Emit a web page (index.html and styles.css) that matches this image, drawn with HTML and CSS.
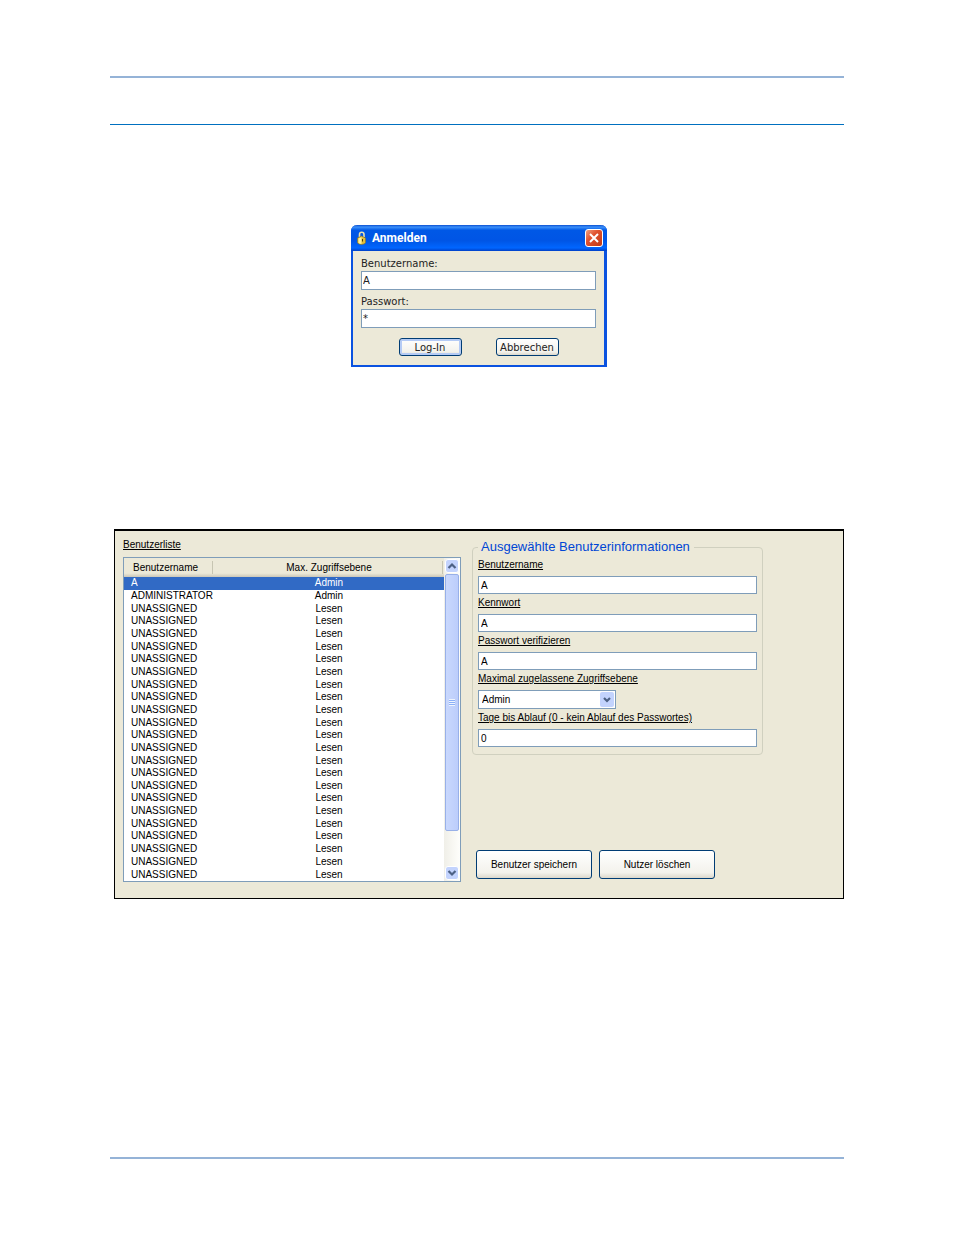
FILE: index.html
```html
<!DOCTYPE html>
<html lang="de">
<head>
  <meta charset="UTF-8">
  <meta name="viewport" content="width=device-width, initial-scale=1.0">
  <title>Anmelden</title>
  <link rel="stylesheet" href="styles.css">
</head>
<body>
  <header class="page-header"></header>

  <main class="content">
    <form class="dialog">
      <div class="title-bar">
        <svg class="lock" viewBox="0 0 12 16" aria-hidden="true">
          <path d="M3.500 8V4.500c0-3 4.500-3 4.500 0V7" fill="none" stroke="#e8e0b0" stroke-width="1.600"/>
          <path d="M1.500 8l4-2 4 2v4.500c0 1-2.500 2-4 2s-4-1-4-2z" fill="#e2bd3a" stroke="#8a7420" stroke-width=".6"/>
          <path d="M2.500 8.500l3-1.200v6.500c-1.500 0-3-.6-3-1.300z" fill="#fff3a0"/>
          <path d="M6.500 9v2.500" stroke="#4a3c08" stroke-width="1"/>
        </svg>
        <h1>Anmelden</h1>
        <button type="button" class="close" aria-label="Schließen">
          <svg viewBox="0 0 18 18" aria-hidden="true"><path d="M4.500 4.500l9 9M13.500 4.500l-9 9" stroke="#fff" stroke-width="2.200"/></svg>
        </button>
      </div>
      <div class="dialog-body">
        <label for="login-name">Benutzername:</label>
        <input type="text" id="login-name" value="A">
        <label for="login-pass">Passwort:</label>
        <input type="text" id="login-pass" value="*">
        <div class="dialog-buttons">
          <button type="submit" class="default">Log-In</button>
          <button type="button">Abbrechen</button>
        </div>
      </div>
    </form>

    <section class="panel">
      <div class="users">
        <h2>Benutzerliste</h2>
        <div class="list">
          <div class="list-view">
            <table>
              <thead>
                <tr><th>Benutzername</th><th>Max. Zugriffsebene</th></tr>
              </thead>
              <tbody>
                <tr class="selected"><td>A</td><td>Admin</td></tr>
                <tr><td>ADMINISTRATOR</td><td>Admin</td></tr>
                <tr><td>UNASSIGNED</td><td>Lesen</td></tr>
                <tr><td>UNASSIGNED</td><td>Lesen</td></tr>
                <tr><td>UNASSIGNED</td><td>Lesen</td></tr>
                <tr><td>UNASSIGNED</td><td>Lesen</td></tr>
                <tr><td>UNASSIGNED</td><td>Lesen</td></tr>
                <tr><td>UNASSIGNED</td><td>Lesen</td></tr>
                <tr><td>UNASSIGNED</td><td>Lesen</td></tr>
                <tr><td>UNASSIGNED</td><td>Lesen</td></tr>
                <tr><td>UNASSIGNED</td><td>Lesen</td></tr>
                <tr><td>UNASSIGNED</td><td>Lesen</td></tr>
                <tr><td>UNASSIGNED</td><td>Lesen</td></tr>
                <tr><td>UNASSIGNED</td><td>Lesen</td></tr>
                <tr><td>UNASSIGNED</td><td>Lesen</td></tr>
                <tr><td>UNASSIGNED</td><td>Lesen</td></tr>
                <tr><td>UNASSIGNED</td><td>Lesen</td></tr>
                <tr><td>UNASSIGNED</td><td>Lesen</td></tr>
                <tr><td>UNASSIGNED</td><td>Lesen</td></tr>
                <tr><td>UNASSIGNED</td><td>Lesen</td></tr>
                <tr><td>UNASSIGNED</td><td>Lesen</td></tr>
                <tr><td>UNASSIGNED</td><td>Lesen</td></tr>
                <tr><td>UNASSIGNED</td><td>Lesen</td></tr>
                <tr><td>UNASSIGNED</td><td>Lesen</td></tr>
              </tbody>
            </table>
          </div>
          <div class="scrollbar">
            <button type="button" class="arrow" aria-label="Nach oben">
              <svg viewBox="0 0 12 12" aria-hidden="true"><path d="M2.500 8L6 4.500 9.500 8" fill="none" stroke="#4d6185" stroke-width="2.200"/></svg>
            </button>
            <div class="thumb"><span class="grip"></span></div>
            <button type="button" class="arrow" aria-label="Nach unten">
              <svg viewBox="0 0 12 12" aria-hidden="true"><path d="M2.500 4L6 7.500 9.500 4" fill="none" stroke="#4d6185" stroke-width="2.200"/></svg>
            </button>
          </div>
        </div>
      </div>

      <form class="details">
        <fieldset>
          <legend>Ausgewählte Benutzerinformationen</legend>
          <label for="user-name">Benutzername</label>
          <input type="text" id="user-name" value="A">
          <label for="user-pass">Kennwort</label>
          <input type="text" id="user-pass" value="A">
          <label for="user-verify">Passwort verifizieren</label>
          <input type="text" id="user-verify" value="A">
          <label for="user-level">Maximal zugelassene Zugriffsebene</label>
          <div class="select">
            <select id="user-level">
              <option>Admin</option>
              <option>Lesen</option>
            </select>
            <svg viewBox="0 0 14 15" aria-hidden="true"><path d="M4 6l3 3 3-3" fill="none" stroke="#4d6185" stroke-width="2.200"/></svg>
          </div>
          <label for="user-days">Tage bis Ablauf (0 - kein Ablauf des Passwortes)</label>
          <input type="text" id="user-days" value="0">
        </fieldset>
        <div class="actions">
          <button type="button">Benutzer speichern</button>
          <button type="button">Nutzer löschen</button>
        </div>
      </form>
    </section>
  </main>

  <footer class="page-footer"></footer>
</body>
</html>
```
FILE: styles.css
```css
:root {
  --rule: #95b3d7;
  --rule-dark: #0070c0;
  --face: #ece9d8;
  --field-border: #7f9db9;
  --button-border: #003c74;
  --select-bg: #316ac5;
  --thumb: #c3d3fd;
}
* {
  box-sizing: border-box;
}
body {
  margin: 0;
  min-height: 100vh;
  padding: 76px 110px;
  display: flex;
  flex-direction: column;
  background: #fff;
  color: #000;
  font-family: 'Liberation Sans', Arial, sans-serif;
  font-size: 10px;
}
.page-header {
  height: 49px;
  border-top: 2px solid var(--rule);
  border-bottom: 1px solid var(--rule-dark);
}
.page-footer {
  margin-top: auto;
  border-top: 2px solid var(--rule);
}
.content {
  padding: 100px 0 0 4px;
}
input, select, button {
  font: inherit;
  color: inherit;
  margin: 0;
}
input {
  display: block;
  width: 100%;
  border: 1px solid var(--field-border);
  background: #fff;
  outline: none;
}
button {
  padding: 0;
  border: 1px solid var(--button-border);
  border-radius: 3px;
  background: linear-gradient(#fff, #f3f2ec 80%, #dcd8cc);
}

/* Login dialog */
.dialog {
  width: 256px;
  margin: 0 auto;
  background: var(--face);
  border: solid #0a52e0;
  border-width: 0 3px 2px 2px;
  border-radius: 6px 6px 0 0;
  font-family: 'DejaVu Sans', Verdana, sans-serif;
  color: #222;
}
.title-bar {
  display: flex;
  align-items: center;
  gap: 4px;
  height: 26px;
  margin: 0 -3px 0 -2px;
  padding: 0 4px 0 5px;
  border-radius: 6px 6px 0 0;
  background: linear-gradient(#0a4fd0, #3b90fa 8%, #0058e6 20%, #0055e5 60%, #0066ff 88%, #0040c8);
}
.title-bar h1 {
  flex: 1;
  margin: 0;
  color: #fff;
  font-family: Roboto, sans-serif;
  font-size: 12px;
  font-weight: 700;
}
.lock {
  width: 12px;
  height: 16px;
}
.close {
  width: 18px;
  height: 18px;
  border-color: #fff;
  background: linear-gradient(135deg, #f0a080, #e0512e 40%, #c03a16);
}
.close svg {
  display: block;
  width: 16px;
  height: 16px;
}
.dialog-body {
  padding: 6px 8px 9px;
}
.dialog-body label {
  display: block;
  line-height: 14px;
}
.dialog-body input {
  height: 19px;
  margin-bottom: 5px;
  padding: 0 1px;
}
.dialog-buttons {
  display: flex;
  justify-content: center;
  gap: 34px;
  padding-top: 5px;
}
.dialog-buttons button {
  width: 63px;
  height: 18px;
}
.dialog-buttons .default {
  box-shadow: inset 0 0 0 2px #b5cbf5;
}

/* User administration */
.panel {
  display: flex;
  gap: 11px;
  margin-top: 162px;
  padding: 7px 80px 16px 8px;
  background: var(--face);
  border: solid #000;
  border-width: 2px 1px 1px;
}
.users {
  flex: 0 0 338px;
}
.users h2 {
  margin: 0 0 5px;
  font-size: 10px;
  font-weight: 400;
  line-height: 14px;
  text-decoration: underline;
}
.list {
  display: flex;
  height: 325px;
  border: 1px solid var(--field-border);
  background: #fff;
}
.list-view {
  flex: 1;
}
.list-view table {
  width: 100%;
  height: 323px;
  border-collapse: collapse;
  table-layout: fixed;
}
.list-view thead {
  background: linear-gradient(var(--face) 80%, #cbc7b8);
}
.list-view th {
  height: 19px;
  padding: 0;
  font-weight: 400;
  background: linear-gradient(#c7c5b2, #c7c5b2) right 1px center / 1px 13px no-repeat;
}
.list-view th:first-child {
  width: 90px;
  padding-left: 9px;
  text-align: left;
}
.list-view td {
  padding: 0 0 0 7px;
  line-height: 12px;
}
.list-view td:last-child {
  padding: 0;
  text-align: center;
}
.selected {
  background: var(--select-bg);
  color: #fff;
}
.scrollbar {
  display: flex;
  flex-direction: column;
  width: 16px;
  padding: 1px;
  background: linear-gradient(90deg, #f0efe8, #fefefb);
}
.arrow {
  flex: none;
  width: 14px;
  height: 14px;
  border: 1px solid #fff;
  background: var(--thumb);
}
.arrow svg {
  display: block;
}
.thumb {
  display: flex;
  align-items: center;
  justify-content: center;
  height: 257px;
  margin: 1px 0 auto;
  border: 1px solid #98b0e8;
  border-radius: 2px;
  background: linear-gradient(90deg, #c9d8fd, #bccdfb);
}
.grip {
  width: 6px;
  height: 7px;
  background: repeating-linear-gradient(#eef4fe 0 1px, #8cb0f8 1px 2px);
}

.details {
  flex: 1;
  display: flex;
  flex-direction: column;
}
fieldset {
  margin: 0;
  padding: 2px 5px 5px;
  border: 1px solid #d0d0bf;
  border-radius: 4px;
}
legend {
  padding: 0 4px 0 3px;
  color: #0046d5;
  font-size: 13px;
  line-height: 18px;
}
fieldset label {
  display: block;
  line-height: 14px;
  margin-bottom: 4px;
  text-decoration: underline;
}
fieldset input {
  height: 18px;
  margin-bottom: 2px;
  padding: 0 2px;
}
.select {
  display: flex;
  width: 138px;
  height: 19px;
  margin-bottom: 2px;
  padding: 1px;
  border: 1px solid var(--field-border);
  background: #fff;
}
.select select {
  flex: 1;
  padding: 0 2px;
  border: 0;
  background: none;
  appearance: none;
  outline: none;
}
.select svg {
  width: 14px;
  background: var(--thumb);
  border-radius: 2px;
}
.actions {
  display: flex;
  gap: 7px;
  margin-top: auto;
  padding: 0 0 3px 4px;
}
.actions button {
  width: 116px;
  height: 29px;
}
```
